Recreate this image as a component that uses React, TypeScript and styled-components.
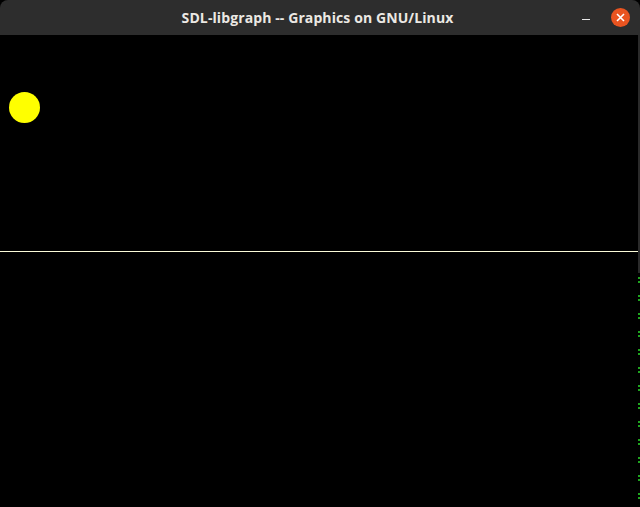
import styled, { createGlobalStyle } from "styled-components";

const GlobalStyle = createGlobalStyle`
  html, body {
    margin: 0;
    padding: 0;
    background: #000;
    overflow: hidden;
  }
`;

const Window = styled.div`
  width: 640px;
  height: 507px;
  display: flex;
  flex-direction: column;
  background: #000;
`;

const TitleBar = styled.div`
  height: 35px;
  flex-shrink: 0;
  display: flex;
  align-items: center;
  justify-content: center;
  position: relative;
  background: #2d2d2d;
  border-top-right-radius: 8px;
  border-top-left-radius: 8px;
`;

const Title = styled.span`
  font-family: "Open Sans", "Noto Sans", sans-serif;
  font-weight: 700;
  font-size: 14px;
  letter-spacing: 0.1px;
  color: #ebe8e3;
  margin-left: -5px;
`;

// window buttons sit over the bar's right end
const Controls = styled.div`
  position: absolute;
  right: 10px;
  top: 8px;
  display: flex;
  align-items: center;
  gap: 21px;
`;

const Minimize = styled.div`
  width: 8px;
  height: 1px;
  margin-top: 4px;
  background: #e8e8e8;
`;

const CloseBtn = styled.div`
  width: 19px;
  height: 19px;
  border-radius: 50%;
  background: #e95420;
  display: grid;
  place-content: center;
`;

const Canvas = styled.div`
  flex: 1;
  display: flex;
`;

const Drawing = styled.div`
  flex: 1;
  display: flex;
  flex-direction: column;
`;

const TopPane = styled.div`
  height: 216px;
  padding: 57px 0 0 9px;
  box-sizing: border-box;
`;

const Ball = styled.div`
  width: 31px;
  height: 31px;
  border-radius: 50%;
  background: #ffff00;
`;

const Rule = styled.div`
  height: 1px;
  background: #fbfbd8;
`;

const Edge = styled.div`
  width: 2px;
  display: flex;
  flex-direction: column;
`;

const EdgeTop = styled.div`
  height: 238px;
  background: #2a2a2a;
`;

const EdgeMarks = styled.div`
  flex: 1;
  display: flex;
  flex-direction: column;
  gap: 12px;
  padding-top: 4px;
`;

const Mark = styled.div`
  height: 6px;
  width: 2px;
  border-top: 2px solid #1fa51f;
  border-bottom: 2px solid #1fa51f;
  box-sizing: border-box;
  flex-shrink: 0;
`;

export default function App() {
  return (
    <>
      <GlobalStyle />
      <Window>
        <TitleBar>
          <Title>SDL-libgraph -- Graphics on GNU/Linux</Title>
          <Controls>
            <Minimize />
            <CloseBtn>
              <svg width="9" height="9" viewBox="0 0 9 9">
                <path d="M1 1L8 8M8 1L1 8" stroke="#fff" strokeWidth="1.6" />
              </svg>
            </CloseBtn>
          </Controls>
        </TitleBar>
        <Canvas>
          <Drawing>
            <TopPane>
              <Ball />
            </TopPane>
            <Rule />
          </Drawing>
          <Edge>
            <EdgeTop />
            <EdgeMarks>
              {Array.from({ length: 13 }).map((_, i) => (
                <Mark key={i} />
              ))}
            </EdgeMarks>
          </Edge>
        </Canvas>
      </Window>
    </>
  );
}
